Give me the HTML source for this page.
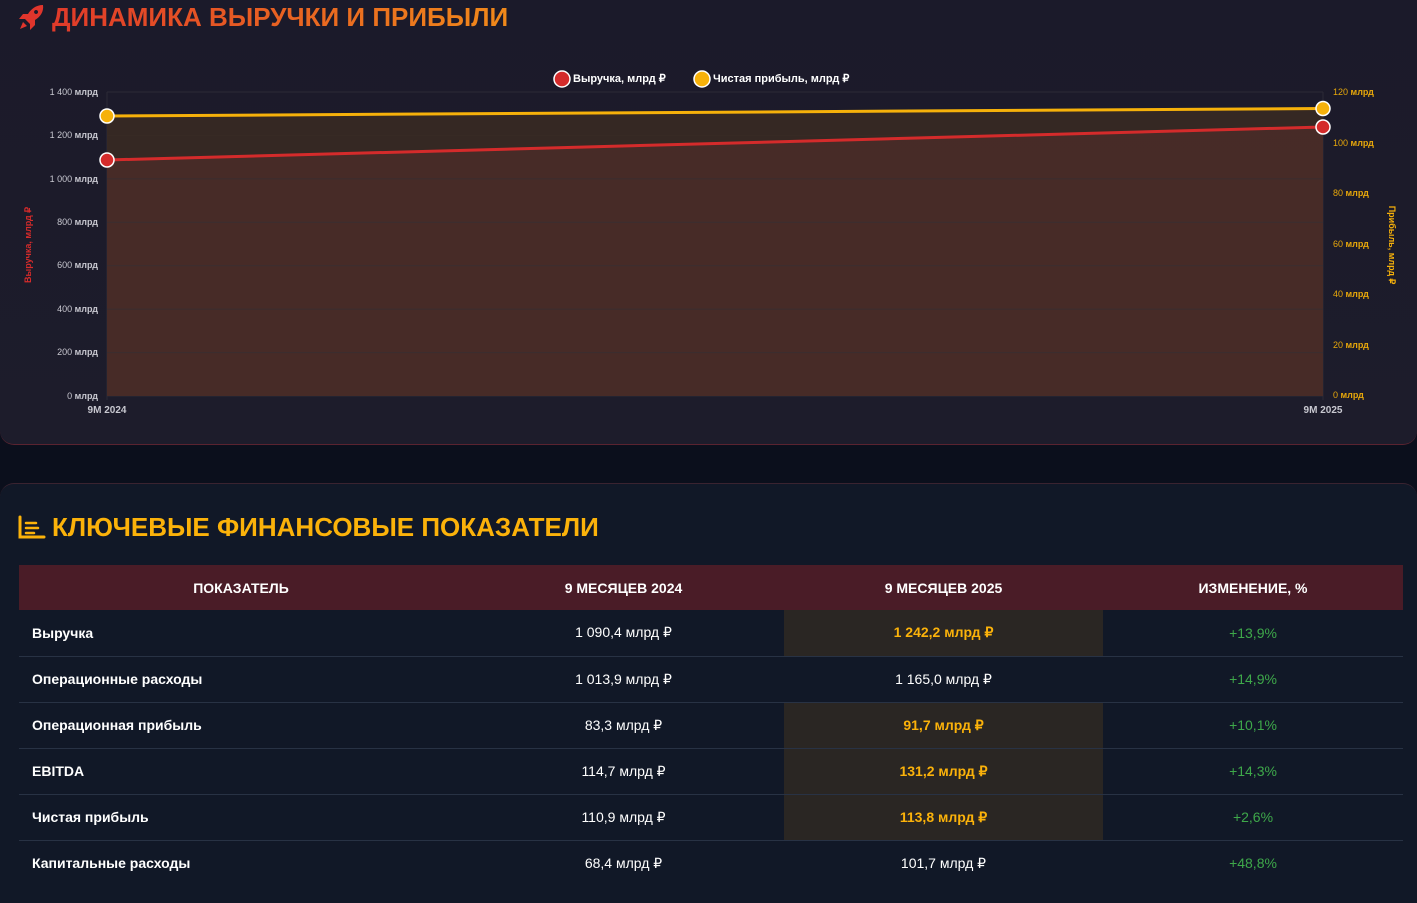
<!DOCTYPE html>
<html><head><meta charset="utf-8"><style>
*{margin:0;padding:0;box-sizing:border-box}
body{width:1417px;height:884px;overflow:hidden;background:#0b0f1c;font-family:"Liberation Sans",sans-serif;position:relative}
.card1{position:absolute;left:0;top:-20px;width:1417px;height:465px;background:linear-gradient(180deg,#1b1a2a,#1d1c2b);border-bottom:1px solid #5a2330;border-radius:0 0 14px 14px}
.t1{position:absolute;left:52px;top:2px;font-size:26px;font-weight:bold;background:linear-gradient(90deg,#e03a2a,#f0891a);-webkit-background-clip:text;color:transparent;white-space:nowrap}
.card2{position:absolute;left:0;top:483px;width:1417px;height:420px;background:#111827;border-top:1px solid #3a2330;border-radius:14px 14px 0 0}
.t2{position:absolute;left:52px;top:512px;font-size:26px;font-weight:bold;color:#fbb20a;white-space:nowrap}
table{position:absolute;left:19px;top:565px;width:1384px;border-collapse:collapse;color:#fff;font-size:14px}
th{background:#4a1c27;height:45px;font-weight:bold;font-size:14px}
td{height:46px;border-bottom:1px solid #283244;text-align:center}
td:first-child{text-align:left;padding-left:13px;font-weight:bold}
td.h{background:#2a2623;color:#fbb20a;font-weight:bold}
td.g{color:#3ea84a}
</style></head><body>
<div class="card1"></div>
<svg style="position:absolute;left:18px;top:4px" width="28" height="26" viewBox="0 0 28 26"><path d="M25 1 C18 1 13 5 10 10 L5 10 L1 15 L7 15 L12 20 L12 26 L17 21 L17 16 C22 13 26 8 25 1Z M18 6 a2 2 0 1 0 .1 0Z" fill="#e0352c" fill-rule="evenodd"/><path d="M5 18 L2 25 L9 22Z" fill="#e0352c"/></svg>
<div class="t1">ДИНАМИКА ВЫРУЧКИ И ПРИБЫЛИ</div>
<svg style="position:absolute;left:0;top:0" width="1417" height="445" font-family="Liberation Sans" font-size="9">
<g stroke="#2c2a36" stroke-width="1">
<line x1="107" y1="92" x2="1323" y2="92"/><line x1="107" y1="135.4" x2="1323" y2="135.4"/><line x1="107" y1="178.9" x2="1323" y2="178.9"/><line x1="107" y1="222.3" x2="1323" y2="222.3"/><line x1="107" y1="265.7" x2="1323" y2="265.7"/><line x1="107" y1="309.1" x2="1323" y2="309.1"/><line x1="107" y1="352.6" x2="1323" y2="352.6"/><line x1="107" y1="396" x2="1323" y2="396"/>
<line x1="107" y1="92" x2="107" y2="400"/><line x1="1323" y1="92" x2="1323" y2="400"/>
</g>
<polygon points="107,116 1323,108.5 1323,396 107,396" fill="#3a2a22" opacity="0.85"/>
<polygon points="107,160 1323,127 1323,396 107,396" fill="#4a2c28" opacity="0.85"/>
<g stroke="#3a2e30" stroke-width="1"><line x1="107" y1="178.9" x2="1323" y2="178.9"/><line x1="107" y1="222.3" x2="1323" y2="222.3"/><line x1="107" y1="265.7" x2="1323" y2="265.7"/><line x1="107" y1="309.1" x2="1323" y2="309.1"/><line x1="107" y1="352.6" x2="1323" y2="352.6"/></g>
<line x1="107" y1="116" x2="1323" y2="108.5" stroke="#f6b10a" stroke-width="3"/>
<line x1="107" y1="160" x2="1323" y2="127" stroke="#d42b2b" stroke-width="3"/>
<circle cx="107" cy="116" r="7" fill="#f6b10a" stroke="#fff" stroke-width="1.5"/>
<circle cx="1323" cy="108.5" r="7" fill="#f6b10a" stroke="#fff" stroke-width="1.5"/>
<circle cx="107" cy="160" r="7" fill="#d42b2b" stroke="#fff" stroke-width="1.5"/>
<circle cx="1323" cy="127" r="7" fill="#d42b2b" stroke="#fff" stroke-width="1.5"/>
<g fill="#c8c8d0" text-anchor="end">
<text x="98" y="95">1 400 <tspan font-weight="bold">млрд</tspan></text><text x="98" y="138">1 200 <tspan font-weight="bold">млрд</tspan></text><text x="98" y="182">1 000 <tspan font-weight="bold">млрд</tspan></text><text x="98" y="225">800 <tspan font-weight="bold">млрд</tspan></text><text x="98" y="268">600 <tspan font-weight="bold">млрд</tspan></text><text x="98" y="312">400 <tspan font-weight="bold">млрд</tspan></text><text x="98" y="355">200 <tspan font-weight="bold">млрд</tspan></text><text x="98" y="399">0 <tspan font-weight="bold">млрд</tspan></text>
</g>
<g fill="#e8a80a">
<text x="1333" y="95">120 <tspan font-weight="bold">млрд</tspan></text><text x="1333" y="146">100 <tspan font-weight="bold">млрд</tspan></text><text x="1333" y="196">80 <tspan font-weight="bold">млрд</tspan></text><text x="1333" y="247">60 <tspan font-weight="bold">млрд</tspan></text><text x="1333" y="297">40 <tspan font-weight="bold">млрд</tspan></text><text x="1333" y="348">20 <tspan font-weight="bold">млрд</tspan></text><text x="1333" y="398">0 <tspan font-weight="bold">млрд</tspan></text>
</g>
<g fill="#c8c8d0" font-weight="bold" font-size="10" text-anchor="middle"><text x="107" y="413">9M 2024</text><text x="1323" y="413">9M 2025</text></g>
<text transform="translate(31,245) rotate(-90)" text-anchor="middle" fill="#d42b2b" font-size="9" font-weight="bold">Выручка, млрд ₽</text>
<text transform="translate(1389,245) rotate(90)" text-anchor="middle" fill="#f6b10a" font-size="9" font-weight="bold">Прибыль, млрд ₽</text>
<circle cx="562" cy="79" r="8" fill="#d42b2b" stroke="#fff" stroke-width="1.5"/>
<text x="573" y="82" fill="#fff" font-size="11" font-weight="bold">Выручка, млрд ₽</text>
<circle cx="702" cy="79" r="8" fill="#f6b10a" stroke="#fff" stroke-width="1.5"/>
<text x="713" y="82" fill="#fff" font-size="11" font-weight="bold">Чистая прибыль, млрд ₽</text>
</svg>
<div class="card2"></div>
<svg style="position:absolute;left:18px;top:515px" width="28" height="26" viewBox="0 0 28 26"><path d="M2 2 V22 H26" stroke="#fbb20a" stroke-width="3" fill="none" stroke-linecap="round"/><path d="M8 8 H18 M8 13 H20 M8 18 H16" stroke="#fbb20a" stroke-width="2.5" stroke-linecap="round"/></svg>
<div class="t2">КЛЮЧЕВЫЕ ФИНАНСОВЫЕ ПОКАЗАТЕЛИ</div>
<table>
<tr><th style="width:444px">ПОКАЗАТЕЛЬ</th><th style="width:321px">9 МЕСЯЦЕВ 2024</th><th style="width:319px">9 МЕСЯЦЕВ 2025</th><th>ИЗМЕНЕНИЕ, %</th></tr>
<tr><td>Выручка</td><td>1 090,4 млрд ₽</td><td class="h">1 242,2 млрд ₽</td><td class="g">+13,9%</td></tr>
<tr><td>Операционные расходы</td><td>1 013,9 млрд ₽</td><td>1 165,0 млрд ₽</td><td class="g">+14,9%</td></tr>
<tr><td>Операционная прибыль</td><td>83,3 млрд ₽</td><td class="h">91,7 млрд ₽</td><td class="g">+10,1%</td></tr>
<tr><td>EBITDA</td><td>114,7 млрд ₽</td><td class="h">131,2 млрд ₽</td><td class="g">+14,3%</td></tr>
<tr><td>Чистая прибыль</td><td>110,9 млрд ₽</td><td class="h">113,8 млрд ₽</td><td class="g">+2,6%</td></tr>
<tr><td style="border:0">Капитальные расходы</td><td style="border:0">68,4 млрд ₽</td><td style="border:0">101,7 млрд ₽</td><td class="g" style="border:0">+48,8%</td></tr>
</table>
</body></html>
